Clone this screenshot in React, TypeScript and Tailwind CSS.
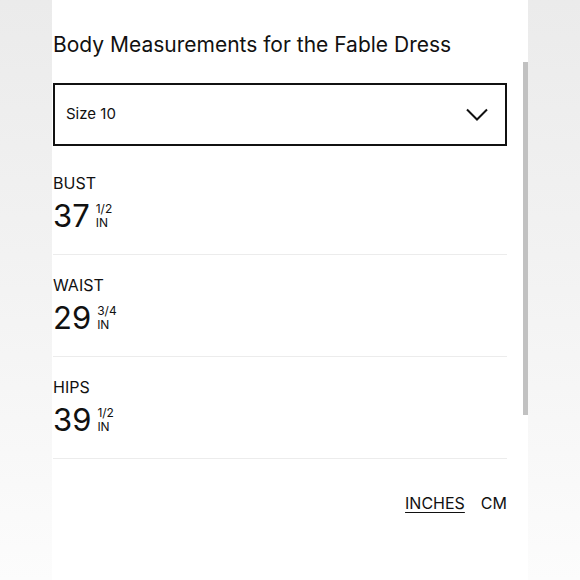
const rows = [
  { label: "BUST", whole: "37", frac: "1/2" },
  { label: "WAIST", whole: "29", frac: "3/4" },
  { label: "HIPS", whole: "39", frac: "1/2" },
];

function Measurement({ label, whole, frac }: { label: string; whole: string; frac: string }) {
  return (
    <div className="border-b border-[#ececec] pt-[20px] pb-[22px]">
      <div className="text-[16px] leading-[20px] text-[#111]">{label}</div>
      <div className="mt-[7px] flex items-end gap-[6px]">
        <span className="text-[31px] leading-[32px] text-[#111]">{whole}</span>
        <div className="flex flex-col items-start pb-[2px] text-[12px] leading-[14px] text-[#111]">
          <div>{frac}</div>
          <div>IN</div>
        </div>
      </div>
    </div>
  );
}

export default function App() {
  return (
    <div
      className="flex h-[580px] w-[580px] justify-center bg-gradient-to-b from-[#ebebeb] via-[#f3f3f3] to-[#fcfcfc]"
      style={{ fontFamily: "Inter, 'Noto Sans', sans-serif" }}
    >
      <div className="relative h-full w-[476px] bg-white pl-[1px]">
        {/* scrollbar */}
        <div className="absolute right-0 top-[62px] h-[353px] w-[5px] bg-[#c1c1c1]" />
        <div className="w-[454px]">
          <h1 className="pt-[31px] text-[21px] leading-[28px] text-[#111]">
            Body Measurements for the Fable Dress
          </h1>
          <div className="mt-[24px] flex h-[63px] items-center justify-between border-2 border-[#111] pl-[11px] pr-[17px]">
            <span className="text-[15px] text-[#111]">Size 10</span>
            <svg width="22" height="14" viewBox="0 0 22 14" fill="none" stroke="#111" strokeWidth="2">
              <polyline points="1,1.5 11,11.5 21,1.5" />
            </svg>
          </div>
          <div className="pt-[7px]">
            {rows.map((r) => (
              <Measurement key={r.label} {...r} />
            ))}
          </div>
          <div className="mt-[32px] flex justify-end gap-[16px] text-[16px] text-[#111]">
            <span className="underline underline-offset-[3px]">INCHES</span>
            <span>CM</span>
          </div>
        </div>
      </div>
    </div>
  );
}
